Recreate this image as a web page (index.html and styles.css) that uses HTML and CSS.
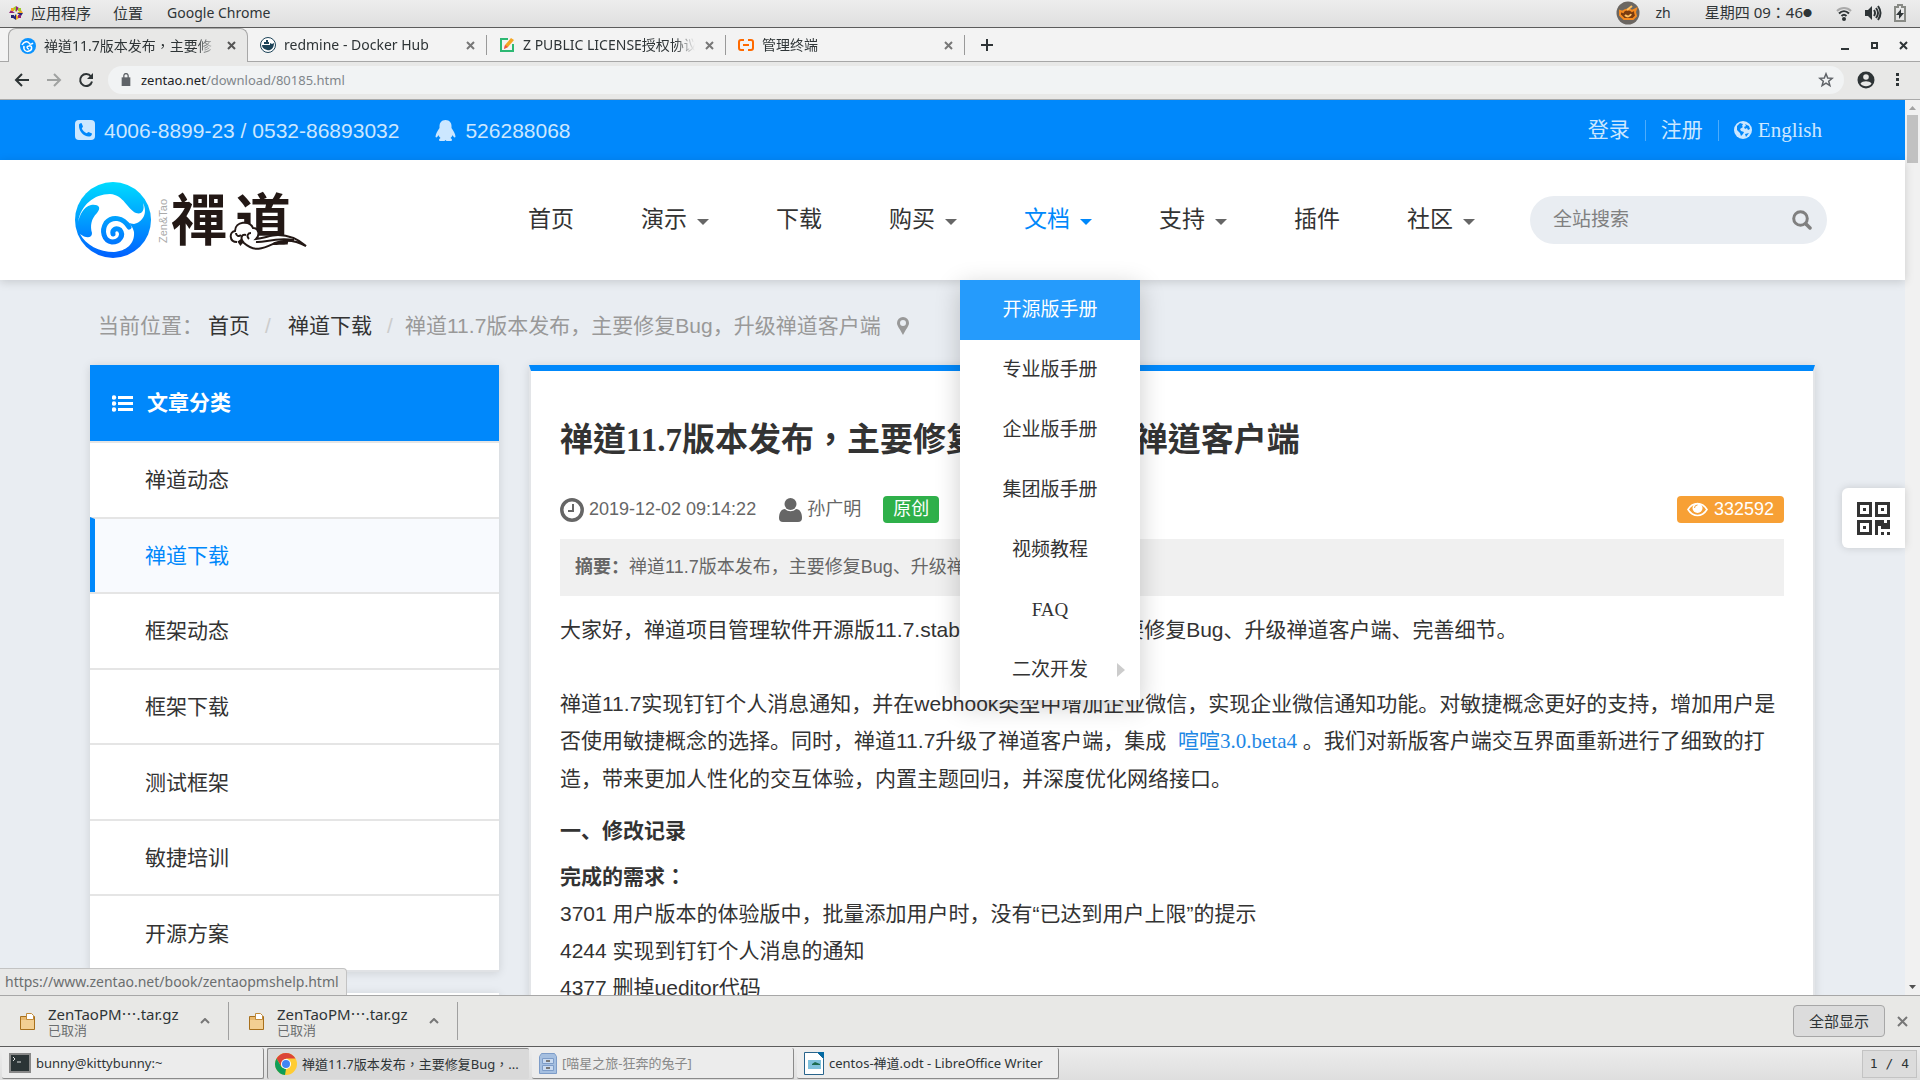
FILE: index.html
```html
<!DOCTYPE html>
<html lang="zh-CN">
<head>
  <meta charset="UTF-8">
  <meta name="viewport" content="width=device-width, initial-scale=1">
  <title>禅道11.7版本发布，主要修复Bug，升级禅道客户端</title>
  <link rel="stylesheet" href="styles.css">
</head>
<body>
  <div class="panel">
    <svg class="panel-logo" viewBox="0 0 14 14" width="14" height="14"><path fill="#9ccd2a" d="M4 2l3-2v6z"/><path fill="#932279" d="M7 0l3 2-3 4zM2 4l4 3H0z"/><path fill="#efa724" d="M12 4l2 3H8zM7 14l3-2-3-4z"/><path fill="#262577" d="M8 7h6l-2 3zM4 12l3 2V8z"/><path fill="#efa724" d="M2 2h3v3H2z"/><path fill="#9ccd2a" d="M9 2h3v3H9z"/><path fill="#262577" d="M2 9h3v3H2z"/><path fill="#932279" d="M9 9h3v3H9z"/></svg>
    <span class="panel-apps">应用程序</span>
    <span class="panel-places">位置</span>
    <span>Google Chrome</span>
    <div class="panel-right">
      <svg viewBox="0 0 24 24" width="24" height="24"><circle cx="12" cy="12" r="11.500" fill="#6b6661"/><path fill="#7a3c10" stroke="#f58a1f" stroke-width="2" d="M4 10l3 1c1-3 7-3 9-1l4-2-1 3 1 4-3 3H8l-4-4z"/><path stroke="#ffc060" stroke-width="2" fill="none" d="M11 9l5-4M9 14c2 2 5 2 6-1"/></svg>
      <span class="panel-lang">zh</span>
      <span class="panel-clock" lang="zh-TW">星期四 09：46<small>●</small></span>
      <svg viewBox="0 0 16 16" width="16" height="16"><g fill="none" stroke="#2e3436" stroke-width="2"><path stroke="#aaa" d="M1 6c4-4 10-4 14 0"/><path d="M3 8.500c3-3 7-3 10 0M5.500 11c1.500-1.500 3.500-1.500 5 0"/></g><circle cx="8" cy="14" r="2" fill="#2e3436"/></svg>
      <svg viewBox="0 0 18 16" width="18" height="16"><path fill="#2e3436" d="M1 5h3l4-4v14l-4-4H1z"/><path fill="none" stroke="#2e3436" stroke-width="2" d="M10 5q2 3 0 6M12 3q4 5 0 10M14 1q5 7 0 14"/></svg>
      <svg viewBox="0 0 12 18" width="12" height="18"><path fill="none" stroke="#888a85" stroke-width="2" d="M1 3h3V1h4v2h3v14H1z"/><path fill="#2e3436" d="M7 5l-5 6h3v4l5-6H7z"/></svg>
    </div>
  </div>

  <div class="tabs">
    <div class="tab active">
      <svg viewBox="0 0 16 16" width="16" height="16"><circle cx="8" cy="8" r="8" fill="#0a93ff"/><path fill="none" stroke="#fff" stroke-width="1.500" d="M2 7c2-4 6-4 7-2s3 1 4 0M4 8c-1 5 3 6 5 5 4-1 3-6 0-5-3 0-2 3 0 3"/></svg>
      <span class="tab-title" lang="zh-TW">禅道11.7版本发布，主要修</span>
      <button class="close" aria-label="关闭"><svg viewBox="0 0 9 9" width="9" height="9"><path stroke="#555" stroke-width="2" d="M1 1l7 7M8 1L1 8"/></svg></button>
    </div>
    <div class="tab">
      <svg viewBox="0 0 16 16" width="16" height="16"><circle cx="8" cy="8" r="7.500" fill="#fff" stroke="#1d4358"/><path fill="#1d4358" d="M2 8h8V6l2 1 2-1c0 6-4 8-7 7S2 11 2 8zM4 5h5v2H4zM6 3h2v2H6z"/></svg>
      <span class="tab-title">redmine - Docker Hub</span>
      <button class="close" aria-label="关闭"><svg viewBox="0 0 9 9" width="9" height="9"><path stroke="#777" stroke-width="2" d="M1 1l7 7M8 1L1 8"/></svg></button>
    </div>
    <div class="tab">
      <svg viewBox="0 0 16 16" width="16" height="16"><path fill="none" stroke="#2db873" stroke-width="2" d="M9 2H2v12h12V7"/><path fill="#f5a623" d="M5 12l1-4 6-7 3 2-6 7z"/><path fill="#f04d4d" d="M5 12l1-4 3 2z"/></svg>
      <span class="tab-title">Z PUBLIC LICENSE授权协议</span>
      <button class="close" aria-label="关闭"><svg viewBox="0 0 9 9" width="9" height="9"><path stroke="#777" stroke-width="2" d="M1 1l7 7M8 1L1 8"/></svg></button>
    </div>
    <div class="tab">
      <svg viewBox="0 0 16 16" width="16" height="16"><path fill="none" stroke="#ff6a00" stroke-width="2" d="M6 3H3Q1 3 1 5v6q0 2 2 2h3M10 3h3q2 0 2 2v6q0 2-2 2h-3M5 8h6"/></svg>
      <span class="tab-title">管理终端</span>
      <button class="close" aria-label="关闭"><svg viewBox="0 0 9 9" width="9" height="9"><path stroke="#777" stroke-width="2" d="M1 1l7 7M8 1L1 8"/></svg></button>
    </div>
    <button class="new-tab" aria-label="新标签页"><svg viewBox="0 0 12 12" width="12" height="12"><path stroke="#2e3436" stroke-width="2" d="M6 0v12M0 6h12"/></svg></button>
    <div class="window-buttons">
      <button aria-label="最小化"><svg viewBox="0 0 9 9" width="9" height="9"><path fill="#2e3436" d="M0 7h8v2H0z"/></svg></button>
      <button aria-label="最大化"><svg viewBox="0 0 9 9" width="9" height="9"><path fill="none" stroke="#2e3436" stroke-width="2" d="M2 2h5v5H2z"/></svg></button>
      <button aria-label="关闭窗口"><svg viewBox="0 0 9 9" width="9" height="9"><path stroke="#2e3436" stroke-width="2" d="M1 1l7 7M8 1L1 8"/></svg></button>
    </div>
  </div>

  <div class="toolbar">
    <button aria-label="后退"><svg viewBox="0 0 16 16" width="16" height="16"><path fill="none" stroke="#2e3436" stroke-width="2" d="M15 8H2M8 2L2 8l6 6"/></svg></button>
    <button aria-label="前进"><svg viewBox="0 0 16 16" width="16" height="16"><path fill="none" stroke="#a0a2a1" stroke-width="2" d="M1 8h13M8 2l6 6-6 6"/></svg></button>
    <button aria-label="刷新"><svg viewBox="0 0 16 16" width="16" height="16"><path fill="none" stroke="#2e3436" stroke-width="2" d="M13 4.500A6 6 0 1 0 14 9.500"/><path fill="#2e3436" d="M15 1v6H9z"/></svg></button>
    <div class="omnibox">
      <svg viewBox="0 0 8 12" width="10" height="13"><path fill="#5f6368" d="M0 4h8v8H0z"/><path fill="none" stroke="#5f6368" stroke-width="1.200" d="M2 5V2.500a2 2 0 0 1 4 0V5"/></svg>
      <span class="url"><b>zentao.net</b>/download/80185.html</span>
      <button aria-label="收藏"><svg viewBox="0 0 16 16" width="16" height="16"><path fill="none" stroke="#5f6368" stroke-width="1.500" d="M8 1.800l1.700 4.200 4.500.3-3.500 2.900 1.200 4.400L8 11.200l-3.900 2.400 1.200-4.400L1.800 6.300l4.500-.3z"/></svg></button>
    </div>
    <button aria-label="用户"><svg viewBox="0 0 18 18" width="18" height="18"><circle cx="9" cy="9" r="8.500" fill="#2e3436"/><circle cx="9" cy="6" r="2.800" fill="#e8e8e7"/><path fill="#e8e8e7" d="M3.500 12.500c2-3 9-3 11 0-2 3.500-9 3.500-11 0z"/></svg></button>
    <button class="menu" aria-label="菜单"><svg viewBox="0 0 4 14" width="4" height="14"><path fill="#2e3436" d="M0 0h3v3H0zM0 5h3v3H0zM0 10h3v3H0z"/></svg></button>
  </div>

  <div class="viewport">
    <div class="page">
      <div class="top-bar">
        <div class="wrap">
          <svg viewBox="0 0 20 20" width="20" height="20"><rect width="20" height="20" rx="4" fill="#cce7ff"/><path fill="#0088fb" d="M4 5c0-1 1-2 2.500-2L8 6.500 6.800 8.500c1 2 2.500 3.500 4.700 4.700L13.500 12l3.500 1.500c0 1.500-1 3-2.500 3C9 17 3.500 11 4 5z"/></svg>
          <span class="phone">4006-8899-23 / 0532-86893032</span>
          <svg viewBox="0 0 20 21" width="21" height="21"><path fill="#cce7ff" d="M10 0C6 0 4 3 4 6v2C2 11 0 14 0 17c1 1 2 0 3-2 0 1 1 2 2 3-2 1-2 3 0 3h4l1-1 1 1h4c2 0 2-2 0-3 1-1 2-2 2-3 1 2 2 3 3 2 0-3-2-6-4-9V6c0-3-2-6-6-6z"/></svg>
          <span>526288068</span>
          <div class="user-links">
            <a href="#">登录</a>
            <a href="#">注册</a>
            <a href="#"><svg viewBox="0 0 18 18" width="18" height="18"><circle cx="9" cy="9" r="9" fill="#cce7ff"/><path fill="#0088fb" d="M3 5l3-3 3 1-1 2 1 1-3 2 1 2 3 1-1 2-2 2-1-3-3-3zM11 3l4 2 1 3-2 1-1-2-2 1-1-2 2-1zM11 13l4-1-3 4z"/></svg>English</a>
          </div>
        </div>
      </div>

      <div class="header">
        <div class="wrap">
          <a class="logo" href="#" aria-label="禅道">
            <svg viewBox="5 0 235 88" width="235" height="88">
              <defs>
                <linearGradient id="sea" x1="0" y1="6" x2="0" y2="82" gradientUnits="userSpaceOnUse">
                  <stop offset="0" stop-color="#00dcff"/>
                  <stop offset="1" stop-color="#005fff"/>
                </linearGradient>
              </defs>
              <circle cx="43" cy="44" r="38" fill="url(#sea)"/>
              <path fill="#fff" d="M8 46C11 29 24 18 40 18C54 19 57 33 66 37C72 39 75 34 73 27C78 37 73 46 64 48C55 47 51 40 42 41C50 42 62 45 64 56C65 68 56 75 44 76C29 76 16 69 10 58C15 62 22 63 22 57C20 50 21 43 27 37C32 31 28 28 21 29C13 31 10 39 8 46Z"/>
              <path fill="none" stroke="url(#sea)" stroke-width="5" stroke-linecap="round" d="M59 51C53 41 42 40 36 47C31 55 34 65 42 66C50 66 54 59 50 54C46 51 42 54 43 58"/>
              <text class="logo-side" transform="rotate(-90 97 67)" x="97" y="67">Zen&amp;Tao</text>
              <text class="logo-name" x="101 165" y="64">禪道</text>
              <g fill="#fff" stroke="#231815" stroke-width="2">
                <path d="M167 66c-8 0-8-10-2-11 0-10 15-11 18-3 6 0 7 7 3 11 9-1 14-4 22-4 12 0 20 4 28 11-11-6-21-7-31-3-11 5-20 10-31 0-4-4-3-9 2-8"/>
                <path fill="none" d="M171 59c-2 2-5 1-5-2M186 66c9 1 18-5 38-2M181 57c-3 0-5 3-2 6"/>
              </g>
            </svg>
          </a>
          <ul class="nav">
            <li><a href="#">首页</a></li>
            <li><a class="caret" href="#">演示</a></li>
            <li><a href="#">下载</a></li>
            <li><a class="caret" href="#">购买</a></li>
            <li class="open">
              <a class="caret" href="#">文档</a>
              <ul class="dropdown">
                <li class="hover"><a href="#">开源版手册</a></li>
                <li><a href="#">专业版手册</a></li>
                <li><a href="#">企业版手册</a></li>
                <li><a href="#">集团版手册</a></li>
                <li><a href="#">视频教程</a></li>
                <li><a href="#">FAQ</a></li>
                <li class="more"><a href="#">二次开发</a></li>
              </ul>
            </li>
            <li><a class="caret" href="#">支持</a></li>
            <li><a href="#">插件</a></li>
            <li><a class="caret" href="#">社区</a></li>
          </ul>
          <form class="search">
            <input type="text" placeholder="全站搜索" aria-label="全站搜索">
            <button type="button" aria-label="搜索"><svg viewBox="0 0 20 20" width="20" height="20"><circle cx="8.500" cy="8.500" r="6.800" fill="none" stroke="#808080" stroke-width="3"/><path stroke="#808080" stroke-width="3.500" stroke-linecap="round" d="M14 14l4 4"/></svg></button>
          </form>
        </div>
      </div>

      <div class="container">
        <div class="breadcrumb">
          <span>当前位置：</span>
          <a href="#">首页</a><i>/</i>
          <a href="#">禅道下载</a><i>/</i>
          <span>禅道11.7版本发布，主要修复Bug，升级禅道客户端</span>
          <svg viewBox="0 0 12 18" width="12" height="18"><path fill="#999" fill-rule="evenodd" d="M6 0a6 6 0 0 1 6 6c0 3-3 6-6 12C3 12 0 9 0 6a6 6 0 0 1 6-6zm0 3a3 3 0 1 0 0 6 3 3 0 0 0 0-6z"/></svg>
        </div>

        <div class="columns">
          <div class="sidebar">
            <div class="category">
              <h2><svg viewBox="0 0 21 17" width="21" height="17"><g fill="#fff"><circle cx="2" cy="2.500" r="2.200"/><circle cx="2" cy="8.500" r="2.200"/><circle cx="2" cy="14.500" r="2.200"/><path d="M6 1h15v3H6zM6 7h15v3H6zM6 13h15v3H6z"/></g></svg>文章分类</h2>
              <ul>
                <li><a href="#">禅道动态</a></li>
                <li class="current"><a href="#">禅道下载</a></li>
                <li><a href="#">框架动态</a></li>
                <li><a href="#">框架下载</a></li>
                <li><a href="#">测试框架</a></li>
                <li><a href="#">敏捷培训</a></li>
                <li><a href="#">开源方案</a></li>
              </ul>
            </div>
            <div class="category next"></div>
          </div>

          <div class="article">
            <h1 lang="zh-TW">禅道11.7版本发布，主要修复Bug，升级禅道客户端</h1>
            <div class="meta">
              <svg viewBox="0 0 24 24" width="24" height="24"><circle cx="12" cy="12" r="10.200" fill="none" stroke="#666" stroke-width="3.500"/><path fill="none" stroke="#666" stroke-width="2" d="M13 6v7H8"/></svg>
              <span class="date">2019-12-02 09:14:22</span>
              <svg viewBox="0 0 23 24" width="23" height="24"><circle cx="11.500" cy="6" r="6" fill="#666"/><path fill="#666" d="M6 11c3 3 8 3 11 0 4 0 6 4 6 9q0 4-4 4H4q-4 0-4-4c0-5 2-9 6-9z"/></svg>
              <span class="author">孙广明</span>
              <span class="tag">原创</span>
              <span class="views"><svg viewBox="0 0 21 15" width="21" height="15"><path fill="none" stroke="#fff" stroke-width="1.600" d="M1 7.500c5-8 14-8 19 0-5 8-14 8-19 0z"/><circle cx="10.500" cy="6" r="5" fill="#fff"/><path fill="none" stroke="#f7a035" d="M7.500 6q0-3 3-3"/></svg>332592</span>
            </div>
            <div class="summary"><b>摘要：</b>禅道11.7版本发布，主要修复Bug、升级禅道客户端、完善细节。</div>
            <p>大家好，禅道项目管理软件开源版11.7.stable版本发布了，主要修复Bug、升级禅道客户端、完善细节。</p>
            <p>禅道11.7实现钉钉个人消息通知，并在webhook类型中增加企业微信，实现企业微信通知功能。对敏捷概念更好的支持，增加用户是否使用敏捷概念的选择。同时，禅道11.7升级了禅道客户端，集成&nbsp; <a href="#">喧喧3.0.beta4</a> 。我们对新版客户端交互界面重新进行了细致的打造，带来更加人性化的交互体验，内置主题回归，并深度优化网络接口。</p>
            <h3>一、修改记录</h3>
            <h3 lang="zh-TW">完成的需求：</h3>
            <div>3701 用户版本的体验版中，批量添加用户时，没有“已达到用户上限”的提示</div>
            <div>4244 实现到钉钉个人消息的通知</div>
            <div>4377 删掉ueditor代码</div>
          </div>
        </div>
      </div>

      <button class="qrcode" aria-label="二维码"><svg viewBox="0 0 11 11" width="33" height="33" shape-rendering="crispEdges"><path fill="#333" fill-rule="evenodd" d="M0 0h5v5H0zM1 1v3h3V1zM2 2h1v1H2zM6 0h5v5H6zM7 1v3h3V1zM8 2h1v1H8zM0 6h5v5H0zM1 7v3h3V7zM2 8h1v1H2zM6 6h3v1h1V6h1v3H8V8H7v3H6zM8 10h1v1H8zM10 10h1v1h-1z"/></svg></button>
    </div>
    <div class="scrollbar">
      <svg viewBox="0 0 7 4" width="7" height="4"><path fill="#a3a3a3" d="M0 4l3.500-4L7 4z"/></svg>
      <div class="thumb"></div>
      <svg class="down" viewBox="0 0 7 4" width="7" height="4"><path fill="#505050" d="M0 0h7L3.500 4z"/></svg>
    </div>
    <div class="status">https://www.zentao.net/book/zentaopmshelp.html</div>
  </div>

  <div class="shelf">
    <div class="download">
      <svg viewBox="0 0 15 17" width="15" height="17"><path fill="#e9b96e" stroke="#a8701c" d="M.5 3.500h14v13H.5z"/><path fill="#fff" stroke="#c08a3a" d="M6.500.500h5l2 2v4h-7z"/><path fill="#f3cf92" d="M1 7h13v9H1z"/></svg>
      <div><div class="file">ZenTaoPM⋯.tar.gz</div><div class="state">已取消</div></div>
      <button aria-label="更多"><svg viewBox="0 0 10 6" width="10" height="6"><path fill="none" stroke="#777" stroke-width="2" d="M1 5l4-4 4 4"/></svg></button>
    </div>
    <div class="download">
      <svg viewBox="0 0 15 17" width="15" height="17"><path fill="#e9b96e" stroke="#a8701c" d="M.5 3.500h14v13H.5z"/><path fill="#fff" stroke="#c08a3a" d="M6.500.500h5l2 2v4h-7z"/><path fill="#f3cf92" d="M1 7h13v9H1z"/></svg>
      <div><div class="file">ZenTaoPM⋯.tar.gz</div><div class="state">已取消</div></div>
      <button aria-label="更多"><svg viewBox="0 0 10 6" width="10" height="6"><path fill="none" stroke="#777" stroke-width="2" d="M1 5l4-4 4 4"/></svg></button>
    </div>
    <button class="show-all">全部显示</button>
    <button class="close" aria-label="关闭"><svg viewBox="0 0 11 11" width="11" height="11"><path stroke="#777" stroke-width="2" d="M1 1l9 9M10 1l-9 9"/></svg></button>
  </div>

  <div class="taskbar">
    <button class="task"><svg viewBox="0 0 22 20" width="22" height="20"><rect x="1" y="1" width="20" height="18" fill="#2b3436" stroke="#888" stroke-width="2"/><path fill="none" stroke="#ddd" d="M4 4l2 2-2 2M8 9h4"/></svg><span>bunny@kittybunny:~</span></button>
    <button class="task pressed"><svg viewBox="0 0 22 22" width="22" height="22"><circle cx="11" cy="11" r="11" fill="#fc3"/><path fill="#db4437" d="M1.500 5.500a11 11 0 0 1 19 0H11L6 13z"/><path fill="#0f9d58" d="M1.500 5.500L6.500 14 11 16l-1 6A11 11 0 0 1 1.500 5.500z"/><circle cx="11" cy="11" r="5" fill="#fff"/><circle cx="11" cy="11" r="4" fill="#4285f4"/></svg><span lang="zh-TW">禅道11.7版本发布，主要修复Bug，...</span></button>
    <button class="task hidden"><svg viewBox="0 0 18 21" width="18" height="21"><path fill="#a5bfe0" stroke="#7d9cc8" d="M2.500.500h13l2 3v17H.5v-17z"/><path fill="#c9daf0" stroke="#7d9cc8" d="M3.500 5.500h11v5h-11zM3.500 12.500h11v5h-11z"/><path stroke="#777" stroke-width="2" d="M7 8h4M7 15h4"/></svg><span>[喵星之旅-狂奔的兔子]</span></button>
    <button class="task"><svg viewBox="0 0 20 23" width="20" height="23"><path fill="#fff" stroke="#28648c" d="M.5.500h13l6 6v16H.5z"/><path fill="#0369a3" d="M13 0h7v7z"/><path fill="#7fc1dc" d="M4 8h13v9H4z"/><path fill="#1d6b4f" d="M8 12l3-2 5 2v1H8z"/></svg><span>centos-禅道.odt - LibreOffice Writer</span></button>
    <span class="pager">1 / 4</span>
  </div>
</body>
</html>
```

FILE: styles.css
```css
* {
  box-sizing: border-box;
}

body {
  margin: 0;
  height: 100vh;
  display: flex;
  flex-direction: column;
  overflow: hidden;
  color: #2e3436;
  font: 14px/20px "Noto Sans", "Noto Sans CJK SC", sans-serif;
}

ul {
  list-style: none;
  margin: 0;
  padding: 0;
}

a {
  color: inherit;
  text-decoration: none;
}

button {
  padding: 0;
  border: 0;
  background: none;
  font: inherit;
  color: inherit;
}

svg {
  display: block;
  flex: none;
}

/* centred punctuation */
span:lang(zh-TW) {
  font-family: "Noto Sans", "Noto Sans CJK TC", sans-serif;
}

/* desktop panel */
.panel {
  height: 28px;
  flex: none;
  display: flex;
  align-items: center;
  padding: 0 14px 2px 9px;
  background: linear-gradient(#ededed, #dfdfdf);
  border-bottom: 1px solid #5c5c5c;
}

.panel-apps {
  margin: 0 22px 0 8px;
  font-size: 15px;
}

.panel-places {
  margin-right: 24px;
  font-size: 15px;
}

.panel-right {
  margin-left: auto;
  display: flex;
  align-items: center;
  gap: 12px;
}

.panel-lang {
  margin: 0 22px 0 4px;
}

.panel-clock {
  margin-right: 12px;
  font-size: 15px;
}

.panel-clock small {
  font-size: 9px;
  vertical-align: 2px;
}

/* browser tabs */
.tabs {
  height: 34px;
  flex: none;
  display: flex;
  padding-left: 8px;
  background: #f3f3f3;
  box-shadow: inset 0 -1px #a7a7a7;
}

.tab {
  width: 239px;
  display: flex;
  align-items: center;
  padding: 0 12px;
  position: relative;
}

.tab + .tab::after {
  content: "";
  position: absolute;
  right: 0;
  top: 7px;
  height: 20px;
  border-right: 1px solid #999;
}

.tab.active {
  background: #e8e8e7;
  border: 1px solid #a7a7a7;
  border-bottom: 0;
  border-radius: 8px 8px 0 0;
  width: 240px;
  padding: 0 11px;
}

.tab-title {
  flex: 1;
  margin: 0 10px 0 8px;
  overflow: hidden;
  white-space: nowrap;
  -webkit-mask-image: linear-gradient(to left, transparent, #000 20px);
  mask-image: linear-gradient(to left, transparent, #000 20px);
}

.new-tab {
  margin-left: 16px;
}

.window-buttons {
  margin: 0 12px 0 auto;
  display: flex;
  gap: 20px;
}

/* address bar */
.toolbar {
  height: 38px;
  flex: none;
  display: flex;
  align-items: center;
  gap: 16px;
  padding: 0 20px 2px 14px;
  background: #e8e8e7;
  border-bottom: 1px solid #aaa;
}

.omnibox {
  flex: 1;
  height: 28px;
  display: flex;
  align-items: center;
  margin: 0 -3px 0 -2px;
  padding: 0 10px 0 13px;
  border-radius: 14px;
  background: #f1f3f4;
}

.url {
  flex: 1;
  margin-left: 10px;
  color: #80868b;
  font-size: 13px;
}

.url b {
  font-weight: 400;
  color: #202124;
}

.menu {
  margin-left: 5px;
}

/* web page area */
.viewport {
  flex: 1;
  min-height: 0;
  display: flex;
  position: relative;
  overflow: hidden;
}

.page {
  flex: 1;
  position: relative;
  background: #e9edf2;
  color: #333;
  font: 21px/37px "Liberation Sans", "Noto Sans CJK SC", sans-serif;
}

.wrap {
  max-width: 1755px;
  margin: 0 auto;
  display: flex;
  align-items: center;
}

.top-bar {
  background: #0088fb;
  color: #cce7ff;
}

.top-bar .wrap {
  height: 60px;
}

.phone {
  margin: 0 36px 0 9px;
}

.phone + svg {
  margin-right: 9px;
}

.user-links {
  margin: 0 8px 0 auto;
  display: flex;
  align-items: center;
  font-family: "Liberation Serif", "Noto Sans CJK SC", serif;
}

.user-links a {
  display: flex;
  align-items: center;
  gap: 6px;
  line-height: 21px;
}

.user-links a + a {
  margin-left: 15px;
  padding-left: 15px;
  border-left: 1px solid #4dacfc;
}

.header {
  position: relative;
  z-index: 2;
  background: #fff;
  box-shadow: 0 2px 9px rgba(0, 0, 0, .15);
}

.header .wrap {
  height: 120px;
}

.logo-side {
  font: 11px "Liberation Sans", sans-serif;
  fill: #aaa;
}

.logo-name {
  font: 700 56px "Noto Sans CJK TC", sans-serif;
  fill: #231815;
}

.nav {
  display: flex;
  gap: 67px;
  margin-left: auto;
  font: 23px/120px "Liberation Serif", "Noto Sans CJK SC", serif;
}

.nav > li {
  position: relative;
}

.nav > .open {
  color: #0088fb;
}

.caret::after {
  content: "";
  display: inline-block;
  margin-left: 10px;
  vertical-align: 2px;
  border: 6px solid transparent;
  border-top-color: #666;
  border-bottom: 0;
}

.open > .caret::after {
  border-top-color: #0088fb;
}

.dropdown {
  position: absolute;
  top: 100%;
  left: 50%;
  width: 180px;
  margin-left: -98px;
  background: #fff;
  color: #333;
  text-align: center;
  font-size: 19px;
  line-height: 60px;
  box-shadow: 0 6px 24px rgba(0, 0, 0, .2);
}

.dropdown .hover {
  background: #259bfc;
  color: #fff;
}

.dropdown .more {
  position: relative;
}

.more::after {
  content: "";
  position: absolute;
  right: 15px;
  top: 23px;
  border: 7px solid transparent;
  border-left: 8px solid #ccc;
  border-right: 0;
}

.search {
  width: 297px;
  height: 48px;
  display: flex;
  align-items: center;
  margin: 0 3px 0 55px;
  padding: 0 15px 0 23px;
  border-radius: 24px;
  background: #e9edf2;
}

.search input {
  flex: 1;
  min-width: 0;
  padding: 0;
  border: 0;
  outline: 0;
  background: none;
  font: 19px/28px "Liberation Sans", "Noto Sans CJK SC", sans-serif;
}

.search input::placeholder {
  color: #808080;
}

.container {
  max-width: 1725px;
  margin: 0 auto;
}

.breadcrumb {
  display: flex;
  align-items: center;
  padding: 27px 8px 21px;
  color: #999;
}

.breadcrumb a {
  margin-left: 5px;
  color: #333;
}

.breadcrumb i {
  width: 33px;
  padding-left: 15px;
  font-style: normal;
  color: #ccc;
}

.breadcrumb i + a {
  margin-left: 5px;
}

.breadcrumb svg {
  margin-left: 16px;
}

.columns {
  display: flex;
  align-items: flex-start;
  gap: 30px;
}

.sidebar {
  width: 409px;
  flex: none;
}

.category {
  margin-bottom: 21px;
  background: #fff;
  box-shadow: 0 1px 9px rgba(0, 0, 0, .12);
}

.category h2 {
  display: flex;
  align-items: center;
  gap: 14px;
  margin: 0;
  padding: 0 22px;
  background: #0088fb;
  color: #fff;
  font-size: 21px;
  line-height: 76px;
}

.category ul {
  display: grid;
  grid-auto-rows: 1fr;
  min-height: 531px;
  border-bottom: 2px solid #e0e2e5;
}

.category li {
  display: flex;
  align-items: center;
  padding-left: 55px;
  border-top: 2px solid #e5e5e5;
}

.category .current {
  padding-left: 50px;
  border-left: 5px solid #0088fb;
  background: #f8fafe;
  color: #0088fb;
}

.category.next {
  height: 300px;
}

.article {
  flex: 1;
  min-width: 0;
  min-height: 700px;
  padding: 45px 29px;
  border: 2px solid #e3e5e8;
  border-top: 6px solid #0088fb;
  background: #fff;
  background-clip: padding-box;
  box-shadow: 0 1px 9px rgba(0, 0, 0, .12);
}

.article h1 {
  margin: 0 0 32px;
  font: 700 33px/48px "Liberation Serif", "Noto Sans CJK TC", serif;
}

.meta {
  display: flex;
  align-items: center;
  color: #666;
  font-size: 18px;
  line-height: 27px;
}

.date {
  margin: 0 23px 0 5px;
}

.author {
  margin: 0 22px 0 5px;
}

.tag,
.views {
  padding: 0 10px;
  border-radius: 4px;
  background: #2fb04a;
  color: #fff;
}

.views {
  display: flex;
  align-items: center;
  gap: 6px;
  margin-left: auto;
  background: #f7a035;
}

.summary {
  margin: 16px 0 15px;
  padding: 10px 15px;
  background: #f0f0f0;
  color: #666;
  font-size: 18px;
}

.article p {
  margin: 0 0 37px;
}

.article p + p {
  margin-bottom: 15px;
}

.article p a {
  color: #1e88e5;
  font-family: "Liberation Serif", "Noto Sans CJK SC", serif;
}

.article h3 {
  margin: 0;
  font: 700 21px/37px "Liberation Sans", "Noto Sans CJK TC", sans-serif;
}

.article h3 + h3 {
  margin-top: 9px;
}

.qrcode {
  position: absolute;
  right: 0;
  top: 388px;
  width: 63px;
  height: 60px;
  padding-left: 15px;
  border-radius: 6px 0 0 6px;
  background: #fff;
  box-shadow: 0 0 9px rgba(0, 0, 0, .15);
}

.scrollbar {
  width: 15px;
  display: flex;
  flex-direction: column;
  align-items: center;
  padding: 6px 2px;
  background: #f1f1f1;
}

.thumb {
  width: 11px;
  height: 48px;
  margin-top: 5px;
  background: #c1c1c1;
}

.scrollbar .down {
  margin-top: auto;
}

.status {
  position: absolute;
  left: 0;
  bottom: 0;
  padding: 3px 7px 3px 5px;
  border: 1px solid #c3c3c3;
  border-width: 1px 1px 0 0;
  border-radius: 0 4px 0 0;
  background: #e8e8e7;
  color: #6b6e6f;
}

/* downloads */
.shelf {
  height: 51px;
  flex: none;
  display: flex;
  align-items: center;
  padding-right: 12px;
  border-top: 1px solid #a7a7a7;
  background: #e8e8e6;
}

.download {
  width: 229px;
  height: 38px;
  display: flex;
  align-items: center;
  padding: 0 18px 0 20px;
  border-right: 1px solid #a0a0a0;
}

.download > div {
  flex: 1;
  margin-left: 13px;
}

.file {
  font-size: 15px;
  line-height: 18px;
}

.state {
  color: #6b6e6f;
  font-size: 13px;
  line-height: 14px;
}

.show-all {
  width: 92px;
  height: 32px;
  margin: 0 12px 0 auto;
  border: 1px solid #a7a7a7;
  border-radius: 4px;
  background: #dcdcdc;
  font-size: 15px;
}

/* window list */
.taskbar {
  height: 34px;
  flex: none;
  display: flex;
  align-items: center;
  gap: 3px;
  padding: 0 3px 0 2px;
  border-top: 1px solid #5c5c5c;
  background: linear-gradient(#ededed, #dedede);
}

.task {
  width: 262px;
  height: 31px;
  display: flex;
  align-items: center;
  gap: 5px;
  padding: 0 7px;
  border: 1px solid #8a8a8a;
  border-width: 0 1px 1px 0;
  border-radius: 2px;
  background: #ececec;
  white-space: nowrap;
  overflow: hidden;
  font-size: 13px;
}

.task.pressed {
  border-width: 1px 0 0 1px;
  background: #d9d9d9;
}

.task.hidden {
  color: #888;
}

.pager {
  margin-left: auto;
  padding: 2px 7px;
  border: 1px solid #c3c3c3;
  background: #dcdcdc;
  font: 13px/22px "DejaVu Sans Mono", monospace;
}
```
